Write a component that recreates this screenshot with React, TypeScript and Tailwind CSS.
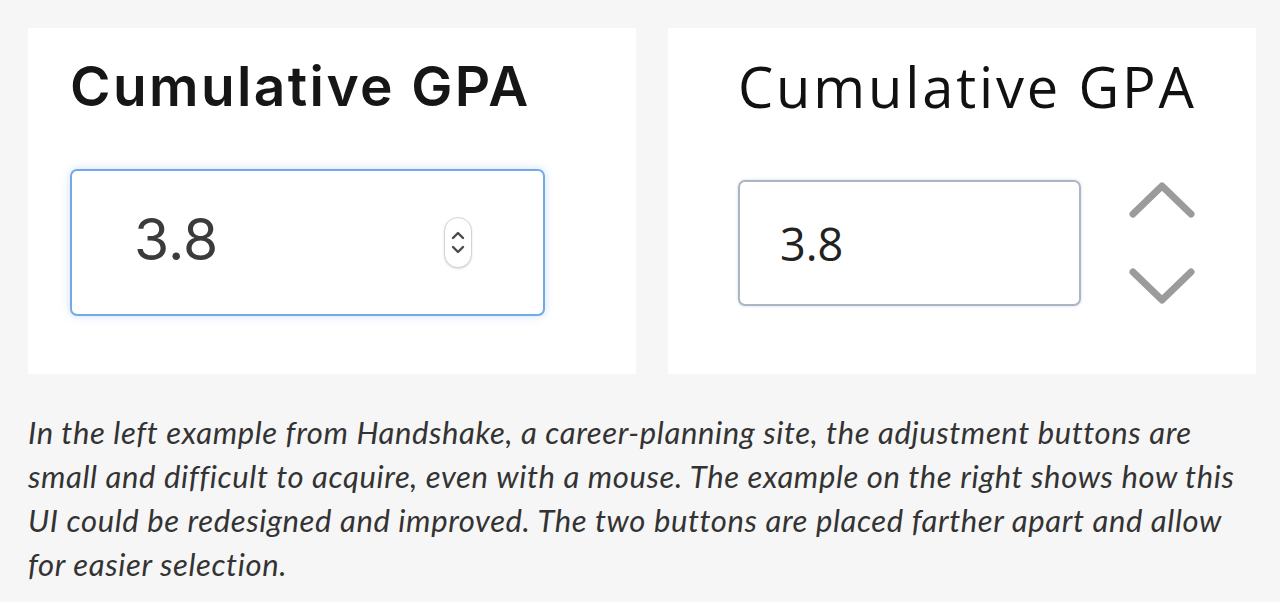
import React from "react";

function UpChevron() {
  return (
    <svg width="66" height="38" viewBox="0 0 66 38" fill="none">
      <path d="M4 33 L33 5 L62 33" stroke="#9b9b9b" strokeWidth="7" strokeLinecap="round" strokeLinejoin="round" />
    </svg>
  );
}

function DownChevron() {
  return (
    <svg width="66" height="38" viewBox="0 0 66 38" fill="none">
      <path d="M4 5 L33 33 L62 5" stroke="#9b9b9b" strokeWidth="7" strokeLinecap="round" strokeLinejoin="round" />
    </svg>
  );
}

function SmallStepper() {
  return (
    <div className="w-[28px] h-[51px] rounded-full border border-[#d4d4d4] bg-white shadow-[0_1px_2px_rgba(0,0,0,0.15)] flex flex-col items-center justify-center gap-[5px]">
      <svg width="14" height="9" viewBox="0 0 14 9" fill="none">
        <path d="M2 7 L7 2 L12 7" stroke="#4a4a4a" strokeWidth="2.4" strokeLinecap="round" strokeLinejoin="round" />
      </svg>
      <svg width="14" height="9" viewBox="0 0 14 9" fill="none">
        <path d="M2 2 L7 7 L12 2" stroke="#4a4a4a" strokeWidth="2.4" strokeLinecap="round" strokeLinejoin="round" />
      </svg>
    </div>
  );
}

export default function App() {
  const lines = [
    "In the left example from Handshake, a career-planning site, the adjustment buttons are",
    "small and difficult to acquire, even with a mouse. The example on the right shows how this",
    "UI could be redesigned and improved. The two buttons are placed farther apart and allow",
    "for easier selection.",
  ];
  return (
    <div className="w-[1280px] h-[602px] bg-[#f6f6f6] pt-[28px] pl-[28px] overflow-hidden">
      <div className="flex gap-[32px]">
        <div className="w-[608px] h-[346px] bg-white pl-[42px] pt-[30px]">
          <div
            className="text-[55px] leading-[56px] font-semibold text-[#161616] tracking-[2.4px]"
            style={{ fontFamily: "Inter, sans-serif" }}
          >
            Cumulative GPA
          </div>
          <div className="mt-[55px] w-[475px] h-[147px] rounded-[7px] border-2 border-[#72a9e6] shadow-[0_0_10px_rgba(114,169,230,0.35)] flex items-center pl-[62px] pr-[71px]">
            <div
              className="flex-1 text-[57px] leading-none text-[#3b3b3b] -mt-[6px]"
              style={{ fontFamily: "Inter, sans-serif" }}
            >
              3.8
            </div>
            <SmallStepper />
          </div>
        </div>
        <div className="w-[588px] h-[346px] bg-white pl-[70px] pt-[30px]">
          <div
            className="text-[56px] leading-[56px] text-[#111] tracking-[2.85px]"
            style={{ fontFamily: "'Open Sans', sans-serif" }}
          >
            Cumulative GPA
          </div>
          <div className="mt-[66px] flex items-center">
            <div className="w-[343px] h-[126px] rounded-[7px] border-2 border-[#aab6c6] shadow-[0_0_3px_rgba(120,140,170,0.35)] flex items-center pl-[40px]">
              <div
                className="text-[45px] leading-none text-[#222]"
                style={{ fontFamily: "'Open Sans', sans-serif" }}
              >
                3.8
              </div>
            </div>
            <div className="ml-[48px] flex flex-col gap-[48px]">
              <UpChevron />
              <DownChevron />
            </div>
          </div>
        </div>
      </div>
      <div
        className="mt-[36px] italic text-[31px] leading-[44px] text-[#333] tracking-[0.62px]"
        style={{ fontFamily: "Lato, sans-serif" }}
      >
        {lines.map((l) => (
          <div key={l} className="whitespace-nowrap">
            {l}
          </div>
        ))}
      </div>
    </div>
  );
}
